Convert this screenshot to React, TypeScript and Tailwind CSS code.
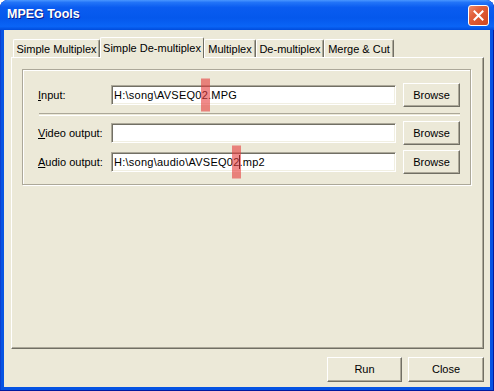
import React from "react";

const font = { fontFamily: '"Liberation Sans", Arial, sans-serif' };

function Btn({ children, className = "" }: { children: React.ReactNode; className?: string }) {
  return (
    <div
      className={`flex items-center justify-center bg-[#ECE9D8] text-[11px] leading-none text-black border border-t-white border-l-white border-r-[#716F64] border-b-[#716F64] shadow-[inset_-1px_-1px_0_#ACA899] ${className}`}
    >
      {children}
    </div>
  );
}

function Field({ children }: { children?: React.ReactNode }) {
  return (
    <div className="w-[285px] h-[20px] bg-white border border-t-[#ACA899] border-l-[#ACA899] border-r-white border-b-white shadow-[inset_1px_1px_0_#716F64,inset_-1px_-1px_0_#F1EFE2] flex items-center pl-[2px] text-[11px] tracking-[0.25px] leading-none text-black whitespace-nowrap">
      {children}
    </div>
  );
}

function Mark({ caret = false }: { caret?: boolean }) {
  return (
    <span className="relative">
      2
      <span className="absolute left-[-1px] top-1/2 -translate-y-1/2 w-[9px] h-[33px] bg-[rgba(230,60,60,0.6)] z-20" />
      {caret && <span className="absolute right-0 top-[-2px] w-[1px] h-[14px] bg-black z-10" />}
    </span>
  );
}

function Row({ ul, rest, value }: { ul: string; rest: string; value?: React.ReactNode }) {
  return (
    <div className="flex items-center h-[24px]">
      <div className="w-[73px] text-[11px] leading-none text-black whitespace-nowrap">
        <u>{ul}</u>
        {rest}
      </div>
      <Field>{value}</Field>
      <Btn className="ml-[7px] w-[57px] h-[24px]">Browse</Btn>
    </div>
  );
}

function Tab({ label, w, selected = false }: { label: string; w: number; selected?: boolean }) {
  if (selected) {
    return (
      <div
        className="relative z-10 h-[21px] bg-[#ECE9D8] border-t border-l border-r border-t-white border-l-white border-r-[#716F64] rounded-t-[2px] flex items-center justify-center text-[11px] leading-none text-black whitespace-nowrap"
        style={{ width: w }}
      >
        {label}
      </div>
    );
  }
  return (
    <div
      className="h-[18px] mb-[1px] bg-[#ECE9D8] border-t border-l border-r border-t-white border-l-white border-r-[#716F64] shadow-[inset_-1px_0_0_#ACA899] rounded-t-[2px] flex items-center justify-center pt-[1px] text-[11px] leading-none text-black whitespace-nowrap"
      style={{ width: w }}
    >
      {label}
    </div>
  );
}

export default function App() {
  return (
    <div className="relative w-[494px] h-[391px] bg-white overflow-hidden" style={font}>
      <div className="w-[494px] h-[391px] rounded-t-[8px] bg-[#0553E3] flex flex-col shadow-[inset_-1px_0_0_#001A9E,inset_0_-1px_0_#001A9E,inset_1px_0_0_#0A3FD0]">
        {/* Title bar */}
        <div className="h-[30px] rounded-t-[8px] flex items-center pl-[7px] pr-[5px] bg-[linear-gradient(to_bottom,#4A97FF_0%,#2274F8_8%,#0A5CF0_25%,#0558EC_60%,#0A64F6_88%,#004CDC_100%)]">
          <div className="text-white font-bold text-[12.5px] leading-none [text-shadow:1px_1px_0_#0A1D8C] flex-1 pb-[1px]">
            MPEG Tools
          </div>
          <div className="w-[21px] h-[21px] rounded-[3px] border border-white bg-[linear-gradient(135deg,#EE8A6A_0%,#E2603A_35%,#D0461F_100%)] flex items-center justify-center">
            <svg width="11" height="11" viewBox="0 0 11 11">
              <path d="M1.5 1.5 L9.5 9.5 M9.5 1.5 L1.5 9.5" stroke="white" strokeWidth="2" strokeLinecap="square" />
            </svg>
          </div>
        </div>

        {/* Client area */}
        <div className="mx-[4px] h-[357px] bg-[#ECE9D8] flex flex-col pt-[7px]">
          {/* Tabs */}
          <div className="flex items-end h-[21px] ml-[9px]">
            <Tab label="Simple Multiplex" w={87} />
            <Tab label="Simple De-multiplex" w={104} selected />
            <Tab label="Multiplex" w={52} />
            <Tab label="De-multiplex" w={68} />
            <Tab label="Merge & Cut" w={70} />
          </div>

          {/* Panel */}
          <div className="-mt-[1px] ml-[7px] w-[473px] h-[292px] border border-t-white border-l-white border-r-[#716F64] border-b-[#716F64] shadow-[inset_-1px_-1px_0_#ACA899] pt-[11px] pl-[10px]">
            <div className="w-[449px] border border-[#ACA899] shadow-[inset_1px_1px_0_#fff,1px_1px_0_#fff] pt-[13px] pb-[10px] pl-[15px] pr-[10px] flex flex-col">
              <Row
                ul="I"
                rest="nput:"
                value={
                  <>
                    {"H:\\song\\AVSEQ0"}
                    <Mark />
                    {".MPG"}
                  </>
                }
              />
              <div className="mt-[6px] ml-[1px] h-[2px] border-t border-[#ACA899] shadow-[0_1px_0_#fff]" />
              <div className="mt-[6px]">
                <Row ul="V" rest="ideo output:" />
              </div>
              <div className="mt-[5px]">
                <Row
                  ul="A"
                  rest="udio output:"
                  value={
                    <>
                      {"H:\\song\\audio\\AVSEQ0"}
                      <Mark caret />
                      {".mp2"}
                    </>
                  }
                />
              </div>
            </div>
          </div>

          {/* Bottom buttons */}
          <div className="mt-[8px] flex justify-end pr-[6px] gap-[6px]">
            <Btn className="w-[75px] h-[25px]">Run</Btn>
            <Btn className="w-[76px] h-[25px]">Close</Btn>
          </div>
        </div>
      </div>
    </div>
  );
}
